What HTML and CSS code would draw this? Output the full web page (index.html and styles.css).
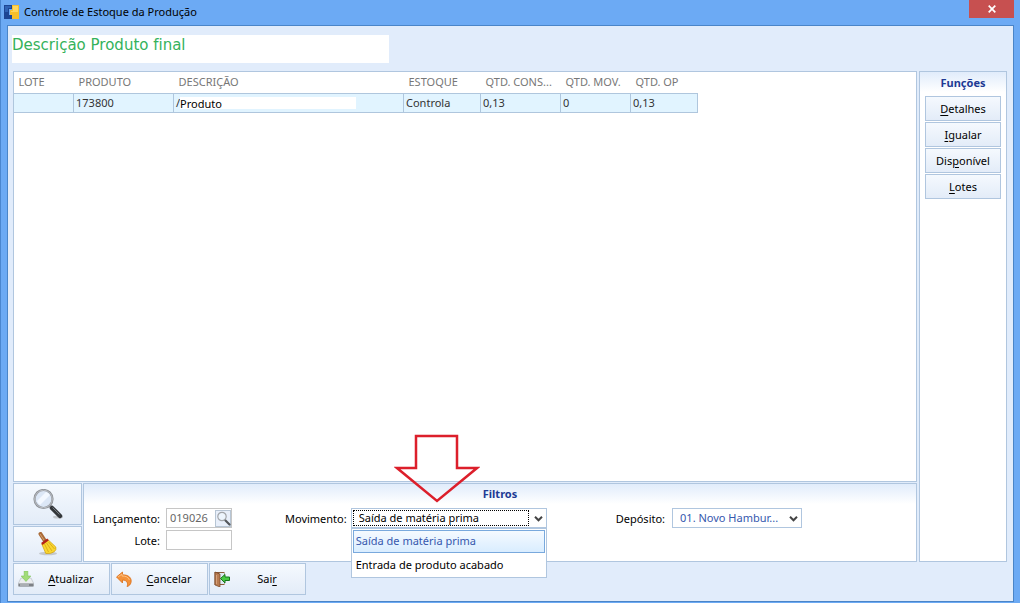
FILE: index.html
```
<!DOCTYPE html>
<html lang="pt-BR">
<head>
<meta charset="utf-8">
<title>Controle de Estoque da Produção</title>
<link rel="stylesheet" href="styles.css">
</head>
<body>
<div class="window">
  <header class="titlebar">
    <svg class="app-icon" width="16" height="16" viewBox="0 0 16 16" aria-hidden="true">
      <path d="M0 1h8v4H5v6h3v4H0z" fill="#1d4694"/>
      <path d="M1 2h6v2H4v4H1z" fill="#2f62b4"/>
      <path d="M8 1h7v14H8v-4H6V6h2z" fill="#f7bf2b"/>
      <path d="M9 2h5v6H7V7h2z" fill="#ffd75f"/>
    </svg>
    <h1 class="title">Controle de Estoque da Produção</h1>
    <button class="close" type="button" aria-label="Fechar">
      <svg width="8" height="8" viewBox="0 0 8 8"><path d="M.7.7l6.600 6.600M7.300.7L.7 7.300" stroke="#fff" stroke-width="1.700"/></svg>
    </button>
  </header>
  <main class="client">
    <div class="banner">Descrição Produto final</div>
    <div class="workspace">
      <div class="left">
        <section class="grid-panel">
          <table class="stock">
            <colgroup><col class="c-60"><col class="c-100"><col class="c-230"><col class="c-77"><col class="c-80"><col class="c-70"><col class="c-67"></colgroup>
            <thead><tr><th>LOTE</th><th>PRODUTO</th><th>DESCRIÇÃO</th><th>ESTOQUE</th><th>QTD. CONS...</th><th>QTD. MOV.</th><th>QTD. OP</th></tr></thead>
            <tbody><tr><td></td><td>173800</td><td><div class="desc"><span class="slash">/</span><span class="patch">Produto</span></div></td><td>Controla</td><td>0,13</td><td>0</td><td>0,13</td></tr></tbody>
          </table>
        </section>
        <div class="lower">
          <div class="tools">
            <button class="tool search" type="button" aria-label="Pesquisar">
              <svg width="30" height="30" viewBox="0 0 30 30">
                <ellipse cx="25" cy="28" rx="5" ry="1.500" fill="#c3c7cd"/>
                <path d="M16.500 16.500l4 4" stroke="#8d8f93" stroke-width="2.500"/>
                <path d="M19 19l8 8" stroke="#34373b" stroke-width="4.500" stroke-linecap="round"/>
                <path d="M19.500 18.500l7 7" stroke="#777b80" stroke-width="1"/>
                <circle cx="10.500" cy="10" r="9" fill="#dce7f6" stroke="#8c9096" stroke-width="2.200"/>
                <circle cx="10.500" cy="10" r="8.800" fill="none" stroke="#c9ccd0" stroke-width=".8"/>
                <path d="M4 12L13 3a8 8 0 0 1 4 3L7 16a8 8 0 0 1-3-4z" fill="#f3f8ff"/>
              </svg>
            </button>
            <button class="tool" type="button" aria-label="Limpar">
              <svg width="22" height="24" viewBox="0 0 22 24">
                <ellipse cx="11" cy="21.500" rx="9" ry="1.800" fill="#c3c7cd"/>
                <path d="M3.500 2l4.500 7" stroke="#a96b39" stroke-width="4" stroke-linecap="round"/>
                <path d="M3 2l4 6" stroke="#d7a374" stroke-width="1"/>
                <path d="M4.800 12l6-4.500 8 7.500q1 3-2 5-3 2-8 1.500z" fill="#f9d62f" stroke="#d3a514" stroke-width=".8"/>
                <path d="M7.500 12l4 8M9.500 11l5.500 8M11.500 10l6 7" stroke="#d9a916" stroke-width=".9" fill="none"/>
                <path d="M4.800 12l6.200-4.500" stroke="#b32218" stroke-width="2.400"/>
              </svg>
            </button>
          </div>
          <section class="filters">
            <h2 class="heading">Filtros</h2>
            <div class="fields">
              <div class="entry-fields">
                <label for="lanc">Lançamento:</label>
                <div class="lookup">
                  <input id="lanc" type="text" value="019026">
                  <button type="button" aria-label="Buscar lançamento">
                    <svg width="15" height="15" viewBox="0 0 15 15"><path d="M9 9l4.500 4.500" stroke="#55585c" stroke-width="2.200" stroke-linecap="round"/><circle cx="6" cy="5.500" r="4.200" fill="#edf5fd" stroke="#a3a6aa" stroke-width="1.200"/></svg>
                  </button>
                </div>
                <label for="lote">Lote:</label>
                <input id="lote" class="plain" type="text">
              </div>
              <div class="field movement">
                <label for="mov">Movimento:</label>
                <div class="combo wide">
                  <select id="mov"><option>Saída de matéria prima</option><option>Entrada de produto acabado</option></select>
                  <svg class="chevron" width="9" height="6" viewBox="0 0 9 6" aria-hidden="true"><path d="M1 .8l3.500 3.500L8 .8" fill="none" stroke="#444" stroke-width="2"/></svg>
                  <ul class="options" role="listbox" aria-label="Movimento">
                    <li class="selected" role="option" aria-selected="true">Saída de matéria prima</li>
                    <li role="option" aria-selected="false">Entrada de produto acabado</li>
                  </ul>
                  <svg class="pointer" width="86" height="70" viewBox="0 0 86 70" aria-hidden="true"><path d="M22 2h41v32h20L43 67 3 34h19z" fill="none" stroke="#dc1f2b" stroke-width="2.500"/></svg>
                </div>
              </div>
              <div class="field">
                <label for="dep">Depósito:</label>
                <div class="combo depot">
                  <select id="dep"><option>01. Novo Hambur...</option></select>
                  <svg class="chevron" width="9" height="6" viewBox="0 0 9 6" aria-hidden="true"><path d="M1 .8l3.500 3.500L8 .8" fill="none" stroke="#444" stroke-width="2"/></svg>
                </div>
              </div>
            </div>
          </section>
        </div>
      </div>
      <aside class="functions">
        <h2 class="heading">Funções</h2>
        <button type="button"><span><u>D</u>etalhes</span></button>
        <button type="button"><span><u>I</u>gualar</span></button>
        <button type="button"><span>Dis<u>p</u>onível</span></button>
        <button type="button"><span><u>L</u>otes</span></button>
      </aside>
    </div>
    <footer class="actions">
      <button type="button">
        <svg width="16" height="16" viewBox="0 0 16 16"><path d="M3 7h10l2.500 5v3H.5v-3z" fill="#eceef0" stroke="#b4b8bd" stroke-width=".6"/><path d="M.5 12.500h15V15.500H.5z" fill="#7d8186"/><path d="M2 14h9" stroke="#d9dcdf"/><path d="M6.200 0h3.600V5h3L8 10.500 3.200 5h3z" fill="#a2dc78" stroke="#7cc554" stroke-width=".6"/></svg>
        <span><u>A</u>tualizar</span>
      </button>
      <button type="button">
        <svg width="16" height="16" viewBox="0 0 16 16"><path d="M.5 6L6.500 1v2.800c6.500 0 9.500 3.500 8.500 7.700-.5 2-2 3.700-4 4C12.500 12.500 11 9 6.500 9v3z" fill="#f4923a" stroke="#d96c14" stroke-width=".8"/><path d="M2 6l4-3v2c4 0 6 1 7.500 4" fill="none" stroke="#ffc486" stroke-width=".9"/></svg>
        <span><u>C</u>ancelar</span>
      </button>
      <button type="button">
        <svg width="16" height="16" viewBox="0 0 16 16"><path d="M.5 1h10v13H.5z" fill="#8c5a38"/><path d="M5 2h5v11H5z" fill="#dce9f2"/><path d="M1 1l5 2v13l-5-2z" fill="#b97b50" stroke="#744223" stroke-width=".7"/><path d="M2.500 4v9" stroke="#d6a17b"/><path d="M6.500 7.500L11 3.500V6h4.500v3.500H11V12z" fill="#49c943" stroke="#16761c" stroke-width="1"/></svg>
        <span>Sai<u>r</u></span>
      </button>
    </footer>
  </main>
</div>
</body>
</html>
```
FILE: styles.css
```
* { box-sizing: border-box; }
body { margin: 0; font: 11px/16px "Noto Sans", "Open Sans", sans-serif; color: #000; }
button, input, select { font: inherit; color: inherit; margin: 0; padding: 0; border-radius: 0; }
h1, h2, ul { margin: 0; padding: 0; font: inherit; }
.window { min-height: 100vh; display: flex; flex-direction: column; background: #6caaf4; border-left: 1px solid #4a86cf; padding: 0 6px 1px; }
.titlebar { height: 25px; display: flex; align-items: center; gap: 4px; padding-bottom: 1px; }
.app-icon { margin-left: -3px; }
.title { flex: 1; font-size: 11px; }
.close { align-self: flex-start; width: 45px; height: 18px; border: 0; background: #c75050; display: grid; place-items: center; }
.client { flex: 1; display: flex; flex-direction: column; background: #e1ecfb; border: 1px solid #4a85c8; padding: 9px 6px 6px 5px; }
.banner { width: 377px; height: 28px; margin-left: -1px; background: #fff; color: #35b25b; font: 15px/20px "DejaVu Sans", sans-serif; font-variant-ligatures: none; }
.workspace { flex: 1; display: flex; gap: 2px; margin-top: 8px; }
.left { flex: 1; min-width: 0; display: flex; flex-direction: column; gap: 1px; }
.grid-panel { flex: 1; background: #fff; border: 1px solid #b0c6df; }
.stock { border-collapse: collapse; table-layout: fixed; width: 684px; margin-left: -1px; }
.c-60 { width: 60px; } .c-100 { width: 100px; } .c-230 { width: 230px; } .c-77 { width: 77px; } .c-80 { width: 80px; } .c-70 { width: 70px; } .c-67 { width: 67px; }
.stock th { height: 21px; padding: 0 0 0 5px; text-align: left; font-weight: 400; color: #777; white-space: nowrap; }
.stock td { height: 19px; padding: 0 2px; background: #e1f4ff; border: 1px solid #afc6dd; color: #333; line-height: 14px; }
.desc { display: flex; height: 12px; }
.slash { flex: none; line-height: 12px; }
.patch { width: 176px; background: #fff; color: #000; line-height: 14px; }
.lower { display: flex; gap: 1px; height: 79px; }
.tools { width: 69px; display: flex; flex-direction: column; gap: 1px; }
.tool, .functions button, .actions button { border: 1px solid #b0c6df; background: linear-gradient(#f5f9fe, #e3ecf8); }
.tool { flex: 1; display: grid; place-items: center; }
.tool.search { flex: 0 0 42px; }
.filters { flex: 1; border: 1px solid #b0c6df; background: linear-gradient(#e1ecfb, #fff 20px); }
.heading { text-align: center; font-weight: 700; color: #203a94; line-height: 20px; }
.fields { display: flex; align-items: flex-start; padding: 4px 0 0 10px; }
.entry-fields { display: grid; grid-template-columns: 66px 66px; column-gap: 6px; row-gap: 2px; align-items: center; }
.entry-fields label { justify-self: end; white-space: nowrap; }
.fields label { padding-top: 2px; }
.lookup, .plain { height: 20px; border: 1px solid #c6c6c6; background: #fff; }
.plain { width: 66px; }
.lookup { display: flex; align-items: center; padding-left: 3px; }
.lookup input { flex: 1; min-width: 0; border: 0; background: none; color: #666; line-height: 16px; }
.lookup button { width: 16px; height: 17px; border: 1px solid #b7c5d4; background: #e8effa; display: grid; place-items: center; }
.field { display: flex; align-items: center; gap: 7px; white-space: nowrap; }
.movement { margin-left: 53px; margin-right: 69px; gap: 4px; }
.combo { position: relative; height: 20px; }
.wide { width: 196px; } .depot { width: 130px; }
.combo select { width: 100%; height: 20px; appearance: none; outline: 0; border: 1px solid #b0c6df; background: #fff; padding: 0 20px 0 7px; }
.depot select { color: #3658ae; }
.wide::after { content: ""; position: absolute; inset: 2px 18px 2px 2px; border: 1px dotted #000; pointer-events: none; }
.chevron { position: absolute; right: 4px; top: 8px; pointer-events: none; }
.options { position: absolute; z-index: 2; left: 0; top: 20px; width: 100%; border: 1px solid #b0c6df; background: #fff; padding: 1px; list-style: none; }
.options li { height: 23px; padding: 0 3px; line-height: 23px; }
.options .selected { color: #3658ae; border: 1px solid #79a9dd; line-height: 20px; background: linear-gradient(#f5faff, #d9edff); padding: 0 2px; }
.pointer { position: absolute; left: 43px; top: -74px; pointer-events: none; }
.functions { width: 88px; border: 1px solid #b0c6df; background: linear-gradient(#e1ecfb, #fff 20px); padding: 1px 5px; display: flex; flex-direction: column; gap: 1px; }
.functions .heading { margin-bottom: 2px; }
.functions button { height: 25px; }
.actions { display: flex; gap: 1px; margin-top: 1px; }
.actions button { width: 97px; height: 32px; display: flex; align-items: center; padding: 0 1px 0 4px; }
.actions span { flex: 1; text-align: center; }
u { text-underline-offset: 2px; }
```
